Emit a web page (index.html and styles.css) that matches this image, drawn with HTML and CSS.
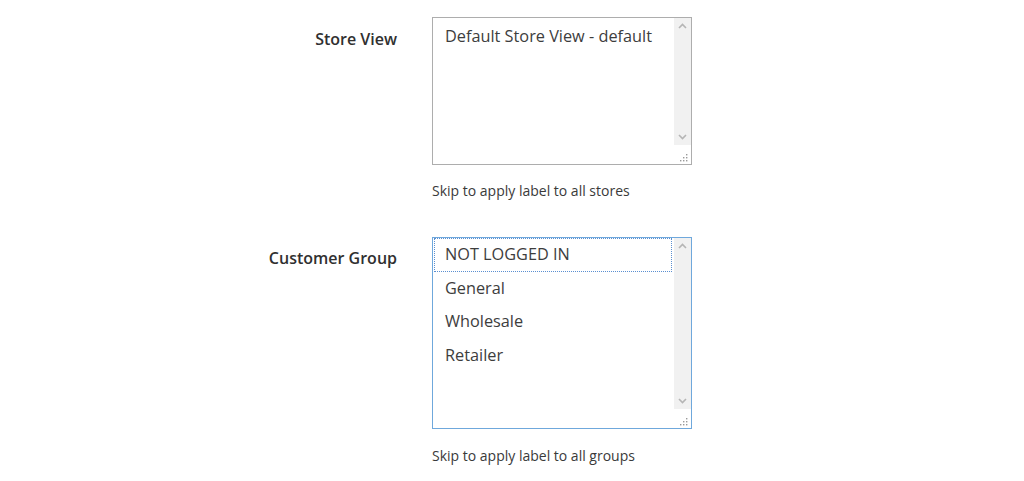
FILE: index.html
```html
<!DOCTYPE html>
<html>
<head>
<meta charset="utf-8">
<link rel="stylesheet" href="styles.css">
</head>
<body>
<div class="form">
  <div class="field">
    <div class="label">Store View</div>
    <div class="control">
      <div class="select">
        <div class="options">
          <div class="option">Default Store View - default</div>
        </div>
        <div class="scroll">
          <div class="track">
            <svg class="arrow" width="17" height="17" viewBox="0 0 17 17"><path d="M5 10 L8.5 6.5 L12 10" fill="none" stroke="#b5b5b5" stroke-width="1.6"/></svg>
            <svg class="arrow" width="17" height="17" viewBox="0 0 17 17"><path d="M5 7 L8.5 10.5 L12 7" fill="none" stroke="#b5b5b5" stroke-width="1.6"/></svg>
          </div>
          <div class="corner">
            <svg width="17" height="19" viewBox="0 0 17 19"><g fill="#9a9a9a"><rect x="12" y="9" width="1.4" height="1.4"/><rect x="9" y="12" width="1.4" height="1.4"/><rect x="12" y="12" width="1.4" height="1.4"/><rect x="6" y="15" width="1.4" height="1.4"/><rect x="9" y="15" width="1.4" height="1.4"/><rect x="12" y="15" width="1.4" height="1.4"/></g></svg>
          </div>
        </div>
      </div>
      <div class="note">Skip to apply label to all stores</div>
    </div>
  </div>
  <div class="field second">
    <div class="label">Customer Group</div>
    <div class="control">
      <div class="select tall focused">
        <div class="options">
          <div class="option active">NOT LOGGED IN</div>
          <div class="option">General</div>
          <div class="option">Wholesale</div>
          <div class="option">Retailer</div>
        </div>
        <div class="scroll">
          <div class="track">
            <svg class="arrow" width="17" height="17" viewBox="0 0 17 17"><path d="M5 10 L8.5 6.5 L12 10" fill="none" stroke="#b5b5b5" stroke-width="1.6"/></svg>
            <svg class="arrow" width="17" height="17" viewBox="0 0 17 17"><path d="M5 7 L8.5 10.5 L12 7" fill="none" stroke="#b5b5b5" stroke-width="1.6"/></svg>
          </div>
          <div class="corner">
            <svg width="17" height="19" viewBox="0 0 17 19"><g fill="#9a9a9a"><rect x="12" y="9" width="1.4" height="1.4"/><rect x="9" y="12" width="1.4" height="1.4"/><rect x="12" y="12" width="1.4" height="1.4"/><rect x="6" y="15" width="1.4" height="1.4"/><rect x="9" y="15" width="1.4" height="1.4"/><rect x="12" y="15" width="1.4" height="1.4"/></g></svg>
          </div>
        </div>
      </div>
      <div class="note">Skip to apply label to all groups</div>
    </div>
  </div>
</div>
</body>
</html>
```

FILE: styles.css
```css
html, body {
  margin: 0;
  padding: 0;
  background: #ffffff;
}
body {
  font-family: "Open Sans", "Liberation Sans", sans-serif;
  color: #333333;
  width: 1024px;
  height: 481px;
  overflow: hidden;
}
.form {
  padding-top: 17px;
  display: flex;
  flex-direction: column;
  gap: 37px;
}
.field {
  display: flex;
  gap: 35px;
}
.label {
  width: 397px;
  box-sizing: border-box;
  text-align: right;
  font-size: 16px;
  font-weight: 600;
  line-height: 20px;
  padding-top: 12px;
  color: #303030;
}
.second .label {
  padding-top: 11px;
}
.control {
  display: flex;
  flex-direction: column;
}
.select {
  width: 260px;
  height: 148px;
  box-sizing: border-box;
  border: 1px solid #adadad;
  display: flex;
  background: #fff;
}
.select.tall {
  height: 192px;
}
.select.focused {
  border-color: #6fa8dc;
}
.options {
  flex: 1;
  padding: 0 2px 0 1px;
}
.option {
  font-size: 16.3px;
  line-height: 33.5px;
  padding-left: 11px;
  color: #3d3d3d;
  white-space: nowrap;
  box-sizing: border-box;
}
.select:not(.tall) .option {
  line-height: 36px;
}
.option.active {
  outline: 1px dotted #5b8fd0;
  outline-offset: -1px;
}
.scroll {
  width: 17px;
  display: flex;
  flex-direction: column;
}
.track {
  flex: 1;
  background: #f1f1f1;
  display: flex;
  flex-direction: column;
  justify-content: space-between;
}
.arrow {
  display: block;
}
.corner {
  height: 19px;
  background: #fff;
}
.corner svg {
  display: block;
}
.note {
  font-size: 14px;
  line-height: 18px;
  margin-top: 17px;
  color: #3a3a3a;
}
.second .note {
  margin-top: 18px;
}
```
